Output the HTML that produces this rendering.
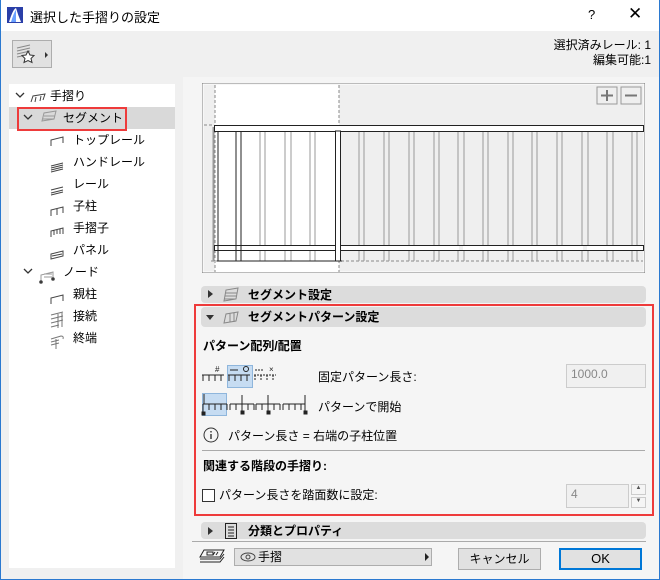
<!DOCTYPE html><html><head><meta charset="utf-8"><style>
*{margin:0;padding:0;box-sizing:border-box}
body{width:660px;height:580px;overflow:hidden;font-family:"Liberation Sans","Noto Sans CJK JP",sans-serif;font-size:12px;color:#000;background:#f0f0f0;position:relative}
.a{position:absolute;white-space:nowrap}
.b{font-weight:bold}
.hdr{position:absolute;left:201px;width:445px;height:17px;background:#dcdcdc;border-radius:4px}
.tri{position:absolute;width:0;height:0}
</style></head><body>
<div class="a" style="left:0;top:0;width:660px;height:580px;border:1px solid #2b79d0;border-top:none"></div>
<div class="a" style="left:1px;top:0;width:658px;height:31px;background:#fff"></div>
<svg class="a" style="left:7px;top:7px" width="16" height="16"><rect width="16" height="16" fill="#2a3fa8"/><path d="M2 15 Q6 2 9 1 Q11 8 14 15Z" fill="#fff"/><path d="M4 15 Q7 5 9 3 L9 15Z" fill="#6aa0ff"/></svg>
<div class="a" style="left:30px;top:7px;font-size:13px">選択した手摺りの設定</div>
<div class="a" style="left:588px;top:7px;font-size:13px">?</div>
<div class="a" style="left:628px;top:4px;font-size:17px;font-weight:300">✕</div>
<div class="a" style="left:1px;top:31px;width:658px;height:548px;background:#f0f0f0"></div>
<div class="a" style="left:183px;top:77px;width:476px;height:502px;background:#f5f5f5"></div>
<div class="a" style="left:12px;top:40px;width:40px;height:28px;border:1px solid #adadad;background:#e1e1e1"></div>
<svg class="a" style="left:16px;top:44px" width="34" height="22"><path d="M1 4 L14 1 M1 7 L14 4 M1 10 L14 7 M1 13 L11 11" stroke="#888" fill="none"/><path d="M12 7 l2 4 4 .5 -3 3 1 4 -4-2 -4 2 1-4 -3-3 4-.5z" fill="#fff" stroke="#333"/><path d="M29 8 l3 3 -3 3z" fill="#333"/></svg>
<div class="a" style="right:9px;top:38px;text-align:right;line-height:15px">選択済みレール: 1<br>編集可能:1</div>
<div class="a" style="left:9px;top:84px;width:166px;height:484px;background:#fff"></div>
<div class="a" style="left:9px;top:107px;width:166px;height:22px;background:#d9d9d9"></div>
<div class="a" style="left:17px;top:107px;width:110px;height:24px;border:2px solid #ee3b3b"></div>
<svg class="a" style="left:14px;top:89px" width="170" height="260" fill="none" stroke="#444">
<path d="M2 4 l4 4 4-4M10 26 l4 4 4-4M10 180 l4 4 4-4" stroke="#333" stroke-width="1.3"/>
<path d="M17 13 l2-6 l12-2 l-2 6 M22 8 l-1 5 M27 7 l-1 5" />
<path d="M28 32 l2-8 l12-2 l-2 8z M30 27 h11 M29 30 h11" stroke="#999"/>
<path d="M37 57 v-6 l12-3 v6" /><path d="M37 77 l12-3 M37 79 l12-3 M37 81 l12-3 M37 83 l12-3"/>
<path d="M37 101 l12-3 M37 104 l12-3 M37 106 l12-3"/>
<path d="M37 127 v-6 l12-3 v6 M43 120 v6"/>
<path d="M37 148 v-6 l12-3 v6 M40 141 v5 M43 140 v5 M46 140 v5"/>
<path d="M37 170 v-5 l12-3 v5 z M38 167 l10-2"/>
<path d="M27 192 v-6 l12-3 v6 M30 185 h8 M30 188 h8" stroke="#999"/><circle cx="27" cy="193" r="1.3" fill="#333"/><circle cx="39" cy="190" r="1.3" fill="#333"/>
<path d="M37 215 v-6 l12-3 v6"/>
<path d="M37 226 l12-3 M37 230 l12-3 M37 234 l12-3 M37 238 l8-2 M44 225 v14 M48 224 v14" stroke="#777"/>
<path d="M37 250 l10-3 q3 0 2 3 M37 253 l8-2 M37 256 l8-2 M42 250 v10" stroke="#777"/>
</svg>
<div class="a" style="left:50px;top:87px">手摺り</div>
<div class="a" style="left:63px;top:109px">セグメント</div>
<div class="a" style="left:73px;top:131px">トップレール</div>
<div class="a" style="left:73px;top:153px">ハンドレール</div>
<div class="a" style="left:73px;top:175px">レール</div>
<div class="a" style="left:73px;top:197px">子柱</div>
<div class="a" style="left:73px;top:219px">手摺子</div>
<div class="a" style="left:73px;top:241px">パネル</div>
<div class="a" style="left:63px;top:263px">ノード</div>
<div class="a" style="left:73px;top:285px">親柱</div>
<div class="a" style="left:73px;top:307px">接続</div>
<div class="a" style="left:73px;top:329px">終端</div>
<svg class="a" style="left:202px;top:83px" width="445" height="190">
<rect x="0.5" y="0.5" width="442" height="189" fill="#efefef" stroke="#777"/>
<rect x="1" y="1" width="441" height="188" fill="none" stroke="#fff"/>
<rect x="13" y="2" width="124" height="187" fill="#fff"/>
<g stroke="#888" stroke-dasharray="3,2" fill="none"><path d="M13 2v187M137 2v187M9 178h432M2 42h8"/></g>
<rect x="395" y="4" width="20" height="17" fill="#efefef" stroke="#999"/><path d="M399 12.5h12M405 7v11" stroke="#777" stroke-width="2"/>
<rect x="419" y="4" width="20" height="17" fill="#efefef" stroke="#999"/><path d="M423 12.5h12" stroke="#777" stroke-width="2"/>
<g stroke="#999" fill="none">
<path d="M11 44v134M12 44v134"/>
<path d="M58 48v130M63 48v130M83 48v130M89 48v130M108 48v130M113 48v130M157 48v130M162 48v130M182 48v130M187 48v130M207 48v130M212 48v130M232 48v130M237 48v130M256 48v130M262 48v130M281 48v130M286 48v130M306 48v130M311 48v130M330 48v130M335 48v130M355 48v130M360 48v130M380 48v130M386 48v130M405 48v130M411 48v130M430 48v130M435 48v130"/>
</g>
<rect x="12.5" y="42.5" width="429" height="6" fill="#fff" stroke="#222"/>
<rect x="12.5" y="162.5" width="429" height="5" fill="#fff" stroke="#222"/>
<g stroke="#222" fill="none"><path d="M16 48v130M34 48v130M39 48v130"/><rect x="133.5" y="48" width="5" height="130" fill="#fff"/><path d="M15 178h125"/></g>
<rect x="257" y="163" width="4" height="4" fill="#efefef"/><rect x="381" y="163" width="4" height="4" fill="#efefef"/>
</svg>
<div class="hdr" style="top:286px"></div>
<div class="tri" style="left:208px;top:290px;border-left:5px solid #333;border-top:4px solid transparent;border-bottom:4px solid transparent"></div>
<svg class="a" style="left:222px;top:287px" width="18" height="16"><path d="M2 14 l2-11 12-2 -2 11z M3 6h12M3 9h12M2 12h12" stroke="#888" fill="none"/></svg>
<div class="a b" style="left:248px;top:286px">セグメント設定</div>
<div class="a" style="left:194px;top:304px;width:460px;height:212px;border:2px solid #ee3b3b"></div>
<div class="hdr" style="top:307px;height:20px"></div>
<div class="tri" style="left:206px;top:315px;border-top:5px solid #333;border-left:4px solid transparent;border-right:4px solid transparent"></div>
<svg class="a" style="left:222px;top:309px" width="18" height="16"><path d="M2 14 l2-9 12-2 -2 9z M8 4v9M12 4v9" stroke="#888" fill="none"/></svg>
<div class="a b" style="left:248px;top:308px">セグメントパターン設定</div>
<div class="a b" style="left:203px;top:337px">パターン配列/配置</div>
<svg class="a" style="left:201px;top:364px" width="118" height="54" fill="none" stroke="#222">
<rect x="26.5" y="1.5" width="25" height="22" fill="#c6dcf2" stroke="#8fb6dc"/>
<rect x="1.5" y="29.5" width="24" height="22" fill="#c6dcf2" stroke="#8fb6dc"/>
<path d="M1 11h22M2 11v6M8 11v6M14 11v6M20 11v6"/><text x="14" y="8" font-size="8" fill="#222" stroke="none">#</text>
<path d="M27 11h22M28 11v6M34 11v6M40 11v6M46 11v6M29 6h8"/><circle cx="45" cy="5" r="2.5"/>
<path d="M53 11h22M54 11v6M60 11v6M66 11v6M72 11v6M54 6h8" stroke-dasharray="2,1"/><text x="68" y="8" font-size="8" fill="#222" stroke="none">×</text>
<path d="M2 40h24M2 40v6M8 40v6M14 40v6M20 40v6M26 40v6M3 30v10M2 46v4M29 40h24M29 40v6M35 40v6M47 40v6M53 40v6M41 31v17M55 40h24M55 40v6M61 40v6M73 40v6M79 40v6M67 31v17M82 40h22M82 40v6M88 40v6M94 40v6M100 40v6M104 31v17" />
<rect x="1" y="48" width="3" height="3" fill="#222"/><rect x="40" y="47" width="3" height="3" fill="#222"/><rect x="66" y="47" width="3" height="3" fill="#222"/><rect x="103" y="47" width="3" height="3" fill="#222"/>
</svg>
<div class="a" style="left:318px;top:368px">固定パターン長さ:</div>
<div class="a" style="left:566px;top:364px;width:80px;height:24px;border:1px solid #ccc;background:#f0f0f0;color:#888;padding:2px 4px;font-size:12px">1000.0</div>
<div class="a" style="left:318px;top:398px">パターンで開始</div>
<svg class="a" style="left:203px;top:427px" width="16" height="16"><circle cx="8" cy="8" r="7" fill="none" stroke="#333"/><path d="M8 7v5M8 4v1.5" stroke="#333" stroke-width="1.4"/></svg>
<div class="a" style="left:228px;top:427px">パターン長さ = 右端の子柱位置</div>
<div class="a" style="left:202px;top:450px;width:443px;height:1px;background:#aaa"></div>
<div class="a b" style="left:203px;top:457px">関連する階段の手摺り:</div>
<div class="a" style="left:202px;top:489px;width:13px;height:13px;border:1px solid #333;background:#fff"></div>
<div class="a" style="left:219px;top:486px">パターン長さを踏面数に設定:</div>
<div class="a" style="left:566px;top:484px;width:63px;height:24px;border:1px solid #ccc;background:#f0f0f0;color:#888;padding:2px 4px">4</div>
<div class="a" style="left:631px;top:484px;width:15px;height:11px;border:1px solid #ccc;font-size:6px;text-align:center;color:#555">▲</div>
<div class="a" style="left:631px;top:497px;width:15px;height:11px;border:1px solid #ccc;font-size:6px;text-align:center;color:#555">▼</div>
<div class="hdr" style="top:522px"></div>
<div class="tri" style="left:208px;top:527px;border-left:5px solid #333;border-top:4px solid transparent;border-bottom:4px solid transparent"></div>
<svg class="a" style="left:224px;top:522px" width="14" height="18"><path d="M1.5 1.5h11v15h-11z M4 5h6M4 8h6M4 11h6M4 14h6" stroke="#222" fill="none"/></svg>
<div class="a b" style="left:248px;top:522px">分類とプロパティ</div>
<div class="a" style="left:192px;top:541px;width:454px;height:1px;background:#aaa"></div>
<svg class="a" style="left:199px;top:548px" width="26" height="18" fill="none" stroke="#222"><path d="M5 2h20l-4 7H1z M1 11h20l4-5 M1 14h20l4-5 M8 4h6v3H8z M16 4l-2 3M19 4l-2 3"/></svg>
<div class="a" style="left:234px;top:548px;width:198px;height:18px;border:1px solid #adadad;background:#e1e1e1"></div>
<svg class="a" style="left:240px;top:552px" width="16" height="10"><ellipse cx="8" cy="5" rx="7" ry="4" fill="none" stroke="#444"/><circle cx="8" cy="5" r="2" fill="none" stroke="#444"/></svg>
<div class="a" style="left:258px;top:548px">手摺</div>
<div class="tri" style="left:425px;top:553px;border-left:4px solid #222;border-top:4px solid transparent;border-bottom:4px solid transparent"></div>
<div class="a" style="left:458px;top:548px;width:83px;height:22px;border:1px solid #adadad;background:#e1e1e1;text-align:center;line-height:20px">キャンセル</div>
<div class="a" style="left:559px;top:548px;width:83px;height:22px;border:2px solid #0078d7;background:#e1e1e1;text-align:center;line-height:18px;font-size:13px">OK</div>
</body></html>
